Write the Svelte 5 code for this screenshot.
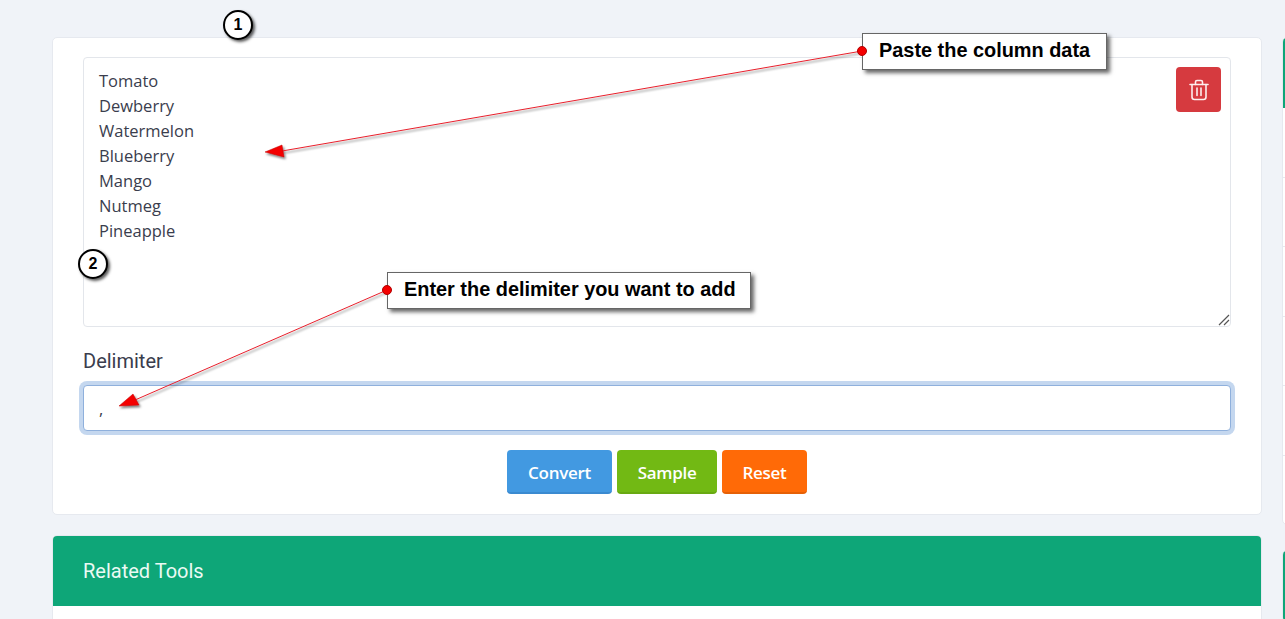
<script>
	const fruits = ['Tomato', 'Dewberry', 'Watermelon', 'Blueberry', 'Mango', 'Nutmeg', 'Pineapple'];
	let data = $state(fruits.join('\n'));
	let delimiter = $state(',');
	const sideRows = [1, 2, 3, 4, 5, 6];
</script>

<div class="page">
	<main class="main">
		<section class="card tool">
			<div class="area-wrap">
				<textarea class="area" spellcheck="false" bind:value={data}></textarea>
				<button class="clear" aria-label="Clear">
					<svg width="20" height="22" viewBox="0 0 20 22" fill="none" stroke="currentColor" stroke-width="1.6" stroke-linecap="round" stroke-linejoin="round">
						<path d="M1 5.5h18" />
						<path d="M6.5 5.5V3A1.5 1.5 0 0 1 8 1.5h4A1.5 1.5 0 0 1 13.500 3v2.500" />
						<path d="M3 5.500V18a2.500 2.500 0 0 0 2.500 2.500h9A2.500 2.500 0 0 0 17 18V5.500" />
						<path d="M8 9v7.500M12 9v7.500" />
					</svg>
				</button>
				<svg class="grip" width="12" height="12" viewBox="0 0 12 12" fill="none" stroke="#555" stroke-width="1.200">
					<path d="M1 11L11 1M6 11l5-5" />
				</svg>
			</div>
			<label class="label" for="delim">Delimiter</label>
			<input id="delim" class="delim" bind:value={delimiter} />
			<div class="actions">
				<button class="btn convert">Convert</button>
				<button class="btn sample">Sample</button>
				<button class="btn reset">Reset</button>
			</div>
		</section>

		<section class="card related">
			<h2 class="related-head">Related Tools</h2>
		</section>
	</main>

	<aside class="side">
		<div class="side-card">
			<div class="side-head"></div>
			{#each sideRows as row (row)}
				<div class="side-row"></div>
			{/each}
		</div>
		<div class="side-card second">
			<div class="side-head"></div>
		</div>
	</aside>

	<!-- annotation layer drawn over the page -->
	<svg class="arrows" width="1285" height="619" viewBox="0 0 1285 619">
		<defs>
			<filter id="drop" x="-20%" y="-20%" width="140%" height="140%">
				<feDropShadow dx="1.500" dy="2" stdDeviation="1.200" flood-color="#000" flood-opacity="0.500" />
			</filter>
		</defs>
		<g filter="url(#drop)">
			<path class="shaft" d="M862 51 L282 151" />
			<path class="head" d="M265 152 L282 145 L284 157 Z" />
		</g>
		<g filter="url(#drop)">
			<path class="shaft" d="M387 290 L135 400" />
			<path class="head" d="M119 406 L133 394 L139 405 Z" />
		</g>
	</svg>

	<div class="callout paste">Paste the column data</div>
	<div class="callout enter">Enter the delimiter you want to add</div>
	<span class="dot dot-paste"></span>
	<span class="dot dot-enter"></span>
	<div class="step one">1</div>
	<div class="step two">2</div>
</div>

<style>
	:global(body) {
		background: #f0f3f8;
		overflow: hidden;
	}
	.page {
		position: relative;
		display: flex;
		align-items: flex-start;
		gap: 20px;
		width: 1285px;
		height: 619px;
		padding: 37px 0 0 52px;
		box-sizing: border-box;
		overflow: hidden;
	}
	.main {
		flex: 0 0 1210px;
		display: flex;
		flex-direction: column;
		gap: 20px;
	}
	.card {
		background: #fff;
		border: 1px solid #e6e9ef;
		border-radius: 5px;
		box-sizing: border-box;
	}
	.tool {
		height: 478px;
		padding: 19px 30px 0;
		display: flex;
		flex-direction: column;
	}
	.area-wrap {
		position: relative;
		height: 270px;
	}
	.area {
		display: block;
		width: 100%;
		height: 100%;
		box-sizing: border-box;
		padding: 10px 15px;
		border: 1px solid #e3e6eb;
		border-radius: 4px;
		outline: none;
		resize: none;
		font: 400 16.500px/25px "Open Sans", sans-serif;
		color: #3a3d4d;
		background: #fff;
	}
	.clear {
		position: absolute;
		top: 10px;
		right: 10px;
		width: 45px;
		height: 45px;
		display: flex;
		align-items: center;
		justify-content: center;
		padding: 0;
		border: none;
		border-radius: 4px;
		background: #d63a3f;
		color: #fdeeee;
	}
	.grip {
		position: absolute;
		right: 1px;
		bottom: 1px;
		pointer-events: none;
	}
	.label {
		margin-top: 22px;
		font: 400 20px/24px Roboto, sans-serif;
		color: #3a3d4d;
	}
	.delim {
		margin-top: 12px;
		height: 46px;
		box-sizing: border-box;
		padding: 0 15px;
		border: 1px solid #8fb0dc;
		border-radius: 4px;
		outline: none;
		box-shadow: 0 0 0 4px #c4d7ef;
		font: 400 16.500px/25px "Open Sans", sans-serif;
		color: #3a3d4d;
	}
	.actions {
		display: flex;
		justify-content: center;
		gap: 5px;
		margin-top: 19px;
	}
	.btn {
		height: 44px;
		padding: 3px 0 0;
		border: none;
		border-bottom: 2px solid;
		border-radius: 4px;
		color: #fff;
		font: 600 17px/1 "Open Sans", sans-serif;
		letter-spacing: -0.3px;
	}
	.convert {
		width: 105px;
		background: #4299e1;
		border-color: #3a8ad0;
	}
	.sample {
		width: 100px;
		background: #72b914;
		border-color: #68a912;
	}
	.reset {
		width: 85px;
		background: #ff6a07;
		border-color: #e66006;
	}
	.related {
		height: 120px;
		overflow: hidden;
	}
	.related-head {
		margin: -1px -1px 0;
		height: 71px;
		padding: 0 31px;
		display: flex;
		align-items: center;
		box-sizing: border-box;
		background: #0ea678;
		color: #eafaf4;
		font: 400 20px/1 Roboto, sans-serif;
	}
	.side {
		flex: 0 0 300px;
		display: flex;
		flex-direction: column;
		gap: 25px;
	}
	.side-card {
		background: #fff;
		border: 1px solid #e6e9ef;
		border-radius: 5px;
		overflow: hidden;
	}
	.side-head {
		height: 70px;
		background: #0ea678;
	}
	.side-row {
		height: 68.500px;
		border-bottom: 1px solid #e6e9ef;
	}
	.side-row:last-child {
		border-bottom: none;
	}
	.arrows {
		position: absolute;
		top: 0;
		left: 0;
		pointer-events: none;
	}
	.shaft {
		fill: none;
		stroke: #e8202c;
		stroke-width: 1;
	}
	.head {
		fill: #f40000;
		stroke: #c00000;
		stroke-width: 0.500;
	}
	.dot {
		position: absolute;
		width: 10px;
		height: 10px;
		box-sizing: border-box;
		background: #f40000;
		border: 1px solid #b00000;
		border-radius: 50%;
	}
	.dot-paste {
		left: 857px;
		top: 46px;
	}
	.dot-enter {
		left: 382px;
		top: 285px;
	}
	.callout {
		position: absolute;
		box-sizing: border-box;
		height: 37px;
		display: flex;
		align-items: center;
		padding: 0 0 1px 16px;
		background: #fff;
		border: 1px solid #666;
		box-shadow: 3px 3px 4px rgba(0, 0, 0, 0.6);
		font: 700 19.900px/1 "Liberation Sans", sans-serif;
		color: #000;
		white-space: nowrap;
	}
	.paste {
		left: 862px;
		top: 33px;
		width: 245px;
	}
	.enter {
		left: 387px;
		top: 272px;
		width: 364px;
	}
	.step {
		position: absolute;
		box-sizing: border-box;
		width: 30px;
		height: 30px;
		display: flex;
		align-items: center;
		justify-content: center;
		background: #fff;
		border: 2px solid #000;
		border-radius: 50%;
		box-shadow: 2px 2px 3px rgba(0, 0, 0, 0.65);
		font: 700 16px/1 "Liberation Sans", sans-serif;
		color: #000;
	}
	.one {
		left: 223px;
		top: 10px;
	}
	.two {
		left: 78px;
		top: 249px;
	}
</style>
